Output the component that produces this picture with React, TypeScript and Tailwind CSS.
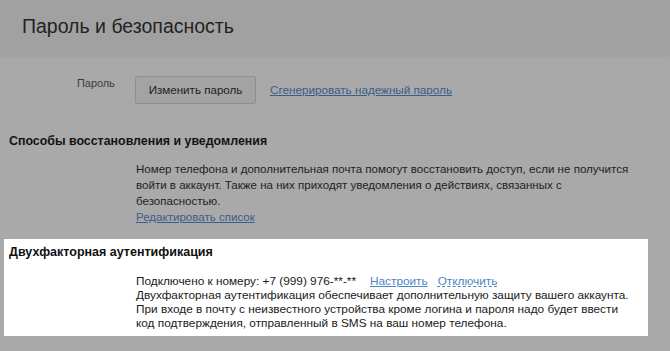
import React from "react";

const font = { fontFamily: '"Liberation Sans", Arial, sans-serif' };

export default function App() {
  return (
    <div className="w-[670px] h-[351px] overflow-hidden bg-[#a9a9a9] text-[#1b1b1b]" style={font}>
      <div className="h-[55px] bg-[#a1a1a1] pl-[22px] pt-[14px] shadow-[0_2px_4px_rgba(0,0,0,0.06)]">
        <h1 className="text-[19.5px] leading-[24px] text-[#232323]">Пароль и безопасность</h1>
      </div>

      <div className="flex items-start pl-[77px] mt-[21px]">
        <div className="w-[58px] text-[10.9px] leading-[14px] text-[#3a3a3a]">Пароль</div>
        <div className="w-[121px] h-[28px] flex items-center justify-center bg-[#a3a3a3] border border-[#8f8f8f] rounded-[2px] text-[11.6px] text-[#1e1e1e]">
          Изменить пароль
        </div>
        <a className="ml-[14px] mt-[7px] text-[11.7px] leading-[14px] text-[#3a5e8a] underline">
          Сгенерировать надежный пароль
        </a>
      </div>

      <h2 className="mt-[29px] pl-[9px] text-[12.4px] leading-[16px] font-bold text-[#141414]">
        Способы восстановления и уведомления
      </h2>
      <div className="mt-[12px] pl-[136px] text-[11.55px] leading-[16px] text-[#1e1e1e] whitespace-nowrap">
        <p>
          Номер телефона и дополнительная почта помогут восстановить доступ, если не получится
          <br />
          войти в аккаунт. Также на них приходят уведомления о действиях, связанных с
          <br />
          безопасностью.
        </p>
        <a className="text-[#3a5e8a] underline">Редактировать список</a>
      </div>

      <div className="mt-[14px] ml-[4px] w-[644px] h-[97px] bg-white px-[5px] pt-[5px]">
        <h2 className="text-[12.5px] leading-[16px] font-bold text-[#111]">Двухфакторная аутентификация</h2>
        <div className="mt-[14px] pl-[127px] text-[11.8px] leading-[14px] text-[#1a1a1a] whitespace-nowrap">
          <div className="flex">
            <span>Подключено к номеру: +7 (999) 976-**-**</span>
            <a className="ml-[14px] text-[#4a86c5] underline">Настроить</a>
            <a className="ml-[10px] text-[#4a86c5] underline decoration-dashed">Отключить</a>
          </div>
          <p>
            Двухфакторная аутентификация обеспечивает дополнительную защиту вашего аккаунта.
            <br />
            При входе в почту с неизвестного устройства кроме логина и пароля надо будет ввести
            <br />
            код подтверждения, отправленный в SMS на ваш номер телефона.
          </p>
        </div>
      </div>
    </div>
  );
}
